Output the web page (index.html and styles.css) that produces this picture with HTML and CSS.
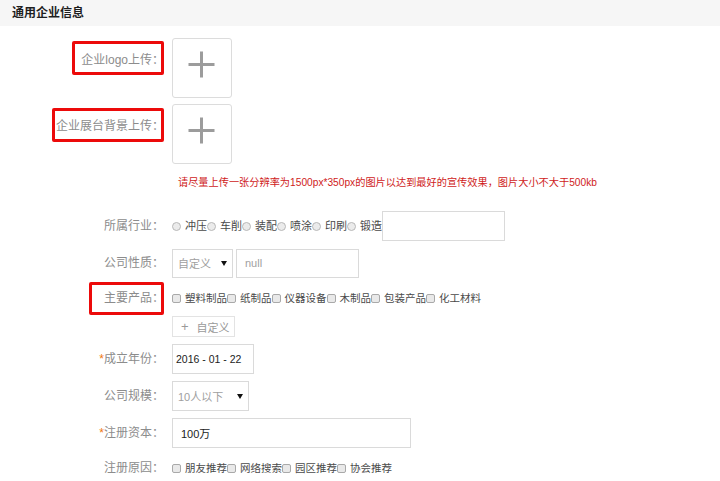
FILE: index.html
```html
<!DOCTYPE html>
<html lang="zh-CN">
<head>
<meta charset="utf-8">
<title>通用企业信息</title>
<link rel="stylesheet" href="styles.css">
</head>
<body>
<div class="title">通用企业信息</div>
<div class="form">
  <div class="row row-upload row-logo">
    <div class="label"><span class="label-text mark mark-logo">企业logo上传：</span></div>
    <div class="controls">
      <div class="upload">
        <svg width="58" height="58" viewBox="0 0 58 58"><path d="M15.5 25.5H41.5M28.5 12.5V38.5" stroke="#9c9c9c" stroke-width="3" fill="none"/></svg>
      </div>
    </div>
  </div>
  <div class="row row-upload row-bg">
    <div class="label"><span class="label-text mark mark-bg">企业展台背景上传：</span></div>
    <div class="controls">
      <div class="upload">
        <svg width="58" height="58" viewBox="0 0 58 58"><path d="M15.5 25.5H41.5M28.5 12.5V38.5" stroke="#9c9c9c" stroke-width="3" fill="none"/></svg>
      </div>
    </div>
  </div>
  <div class="hint">请尽量上传一张分辨率为1500px*350px的图片以达到最好的宣传效果，图片大小不大于500kb</div>
  <div class="row row-field row-industry">
    <div class="label"><span class="label-text">所属行业：</span></div>
    <div class="controls">
      <span class="opt"><span class="radio"></span>冲压</span>
      <span class="opt"><span class="radio"></span>车削</span>
      <span class="opt"><span class="radio"></span>装配</span>
      <span class="opt"><span class="radio"></span>喷涂</span>
      <span class="opt"><span class="radio"></span>印刷</span>
      <span class="opt"><span class="radio"></span>锻造</span>
      <div class="input input-industry"></div>
    </div>
  </div>
  <div class="row row-field">
    <div class="label"><span class="label-text">公司性质：</span></div>
    <div class="controls">
      <div class="select select-nature"><span class="placeholder">自定义</span><span class="caret"></span></div>
      <div class="input input-nature"><span class="placeholder">null</span></div>
    </div>
  </div>
  <div class="row row-check row-products">
    <div class="label"><span class="label-text mark mark-products">主要产品：</span></div>
    <div class="controls">
      <span class="opt opt-check"><span class="check"></span>塑料制品</span>
      <span class="opt opt-check"><span class="check"></span>纸制品</span>
      <span class="opt opt-check"><span class="check"></span>仪器设备</span>
      <span class="opt opt-check"><span class="check"></span>木制品</span>
      <span class="opt opt-check"><span class="check"></span>包装产品</span>
      <span class="opt opt-check"><span class="check"></span>化工材料</span>
    </div>
  </div>
  <div class="row row-button">
    <div class="label"></div>
    <div class="controls">
      <div class="btn-custom"><span class="btn-plus">+</span>自定义</div>
    </div>
  </div>
  <div class="row row-field">
    <div class="label"><span class="label-text"><span class="req">*</span>成立年份：</span></div>
    <div class="controls">
      <div class="input input-date"><span class="value">2016 - 01 - 22</span></div>
    </div>
  </div>
  <div class="row row-field">
    <div class="label"><span class="label-text">公司规模：</span></div>
    <div class="controls">
      <div class="select select-size"><span class="placeholder">10人以下</span><span class="caret"></span></div>
    </div>
  </div>
  <div class="row row-field">
    <div class="label"><span class="label-text"><span class="req">*</span>注册资本：</span></div>
    <div class="controls">
      <div class="input input-capital"><span class="value">100万</span></div>
    </div>
  </div>
  <div class="row row-check row-reason">
    <div class="label"><span class="label-text">注册原因：</span></div>
    <div class="controls">
      <span class="opt opt-check"><span class="check"></span>朋友推荐</span>
      <span class="opt opt-check"><span class="check"></span>网络搜索</span>
      <span class="opt opt-check"><span class="check"></span>园区推荐</span>
      <span class="opt opt-check"><span class="check"></span>协会推荐</span>
    </div>
  </div>
</div>
</body>
</html>
```

FILE: styles.css
```css
html, body {
  margin: 0;
  padding: 0;
}
body {
  width: 720px;
  height: 481px;
  overflow: hidden;
  background: #fff;
  font-family: "Liberation Sans", "Noto Sans CJK SC", sans-serif;
  font-size: 12px;
  color: #333;
}
.title {
  height: 26px;
  line-height: 26px;
  padding-left: 12px;
  background: #f6f6f6;
  color: #1e1e1e;
  font-size: 12px;
  font-weight: bold;
}
.form {
  display: flex;
  flex-direction: column;
}
.row {
  display: flex;
  align-items: center;
}
.label {
  width: 164px;
  flex: none;
  text-align: right;
  color: #8c8c8c;
  font-size: 12px;
  line-height: 16px;
}
.label-text {
  position: relative;
  display: inline-block;
}
.req {
  color: #f0780f;
}
.mark::after {
  content: "";
  position: absolute;
  border: 3px solid #ec0a0a;
  border-radius: 2px;
  right: 0;
}
.mark-logo::after {
  left: -9px;
  top: -11px;
  bottom: -7px;
}
.mark-bg::after {
  left: -4px;
  top: -10px;
  bottom: -8px;
}
.mark-products::after {
  left: -15px;
  top: -8px;
  bottom: -9px;
}
.controls {
  margin-left: 8px;
  display: flex;
  align-items: center;
}
.row-upload {
  align-items: flex-start;
  height: 60px;
}
.row-upload .label {
  padding-top: 14px;
}
.row-logo {
  margin-top: 12px;
}
.row-bg {
  margin-top: 6px;
}
.upload {
  width: 60px;
  height: 60px;
  box-sizing: border-box;
  border: 1px solid #dcdcdc;
  border-radius: 3px;
}
.upload svg {
  display: block;
}
.hint {
  margin-top: 11px;
  padding-left: 178px;
  line-height: 16px;
  font-size: 10.2px;
  color: #cf1b1b;
  white-space: nowrap;
}
.row-field {
  height: 30px;
  margin-top: 7px;
}
.row-industry {
  margin-top: 20px;
}
.row-check {
  height: 20px;
  margin-top: 10px;
}
.row-button {
  height: 21px;
  margin-top: 8px;
}
.opt {
  display: inline-flex;
  align-items: center;
  font-size: 11px;
  line-height: 14px;
  color: #4a4a4a;
  white-space: nowrap;
}
.opt-check {
  font-size: 10.5px;
}
.radio {
  width: 9px;
  height: 9px;
  box-sizing: border-box;
  border: 1px solid #b8b8b8;
  border-radius: 50%;
  background: #ebebeb;
  margin-right: 4px;
}
.check {
  width: 9px;
  height: 9px;
  box-sizing: border-box;
  border: 1px solid #a9a9a9;
  border-radius: 2px;
  background: #e9e9e9;
  margin-right: 4px;
}
.input, .select {
  box-sizing: border-box;
  height: 30px;
  border: 1px solid #dadada;
  background: #fff;
  display: flex;
  align-items: center;
  font-size: 11px;
}
.placeholder {
  color: #a0a0a0;
}
.value {
  color: #1c1c1c;
}
.input-industry {
  width: 123px;
}
.select-nature {
  width: 61px;
  height: 29px;
  padding: 0 5px;
  justify-content: space-between;
}
.input-nature {
  width: 123px;
  height: 29px;
  margin-left: 3px;
  padding-left: 8px;
}
.caret {
  width: 0;
  height: 0;
  border-left: 3px solid transparent;
  border-right: 3px solid transparent;
  border-top: 5px solid #111;
}
.btn-custom {
  box-sizing: border-box;
  width: 63px;
  height: 21px;
  border: 1px solid #e3e3e3;
  display: flex;
  align-items: center;
  padding-left: 8px;
  color: #9a9a9a;
  font-size: 11px;
}
.btn-plus {
  font-size: 13px;
  margin-right: 8px;
}
.input-date {
  width: 82px;
  padding-left: 3px;
  font-size: 10.5px;
}
.select-size {
  width: 77px;
  padding: 0 5px;
  justify-content: space-between;
}
.input-capital {
  width: 239px;
  padding-left: 8px;
}
```
